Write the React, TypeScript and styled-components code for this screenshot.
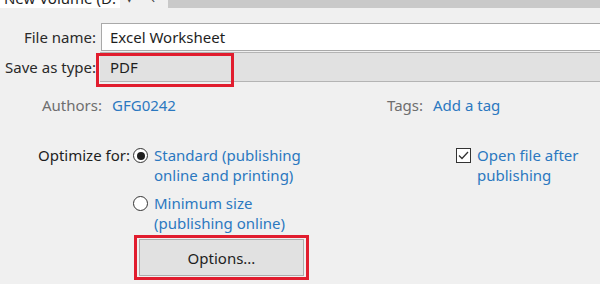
import styled, { createGlobalStyle } from 'styled-components';

const COLORS = {
  bg: '#f0f0f0',
  text: '#1e1e1e',
  muted: '#6e6e6e',
  link: '#2b78c0',
  red: '#e11d2e',
  border: '#acacac',
};

const GlobalStyle = createGlobalStyle`
  html, body {
    margin: 0;
    padding: 0;
    background: ${COLORS.bg};
  }
  body {
    font-family: 'Noto Sans', 'Open Sans', sans-serif;
    font-size: 14px;
    color: ${COLORS.text};
  }
`;

const Page = styled.div`
  width: 600px;
  height: 284px;
  overflow: hidden;
  position: relative;
  background: ${COLORS.bg};
`;

const PathBar = styled.div`
  display: flex;
  height: 8px;
  overflow: hidden;
`;

const PathTab = styled.div`
  width: 120px;
  background: #ffffff;
  overflow: hidden;
  display: flex;
`;

const PathText = styled.span`
  margin-top: -12px;
  line-height: 20px;
  white-space: nowrap;
  font-size: 15px;
`;

const PathGlyph = styled.span<{ w: number }>`
  width: ${({ w }) => w}px;
  margin-top: -12px;
  line-height: 20px;
  font-size: 13px;
  color: #444;
  text-align: center;
  background: ${COLORS.bg};
`;

const PathFill = styled.div`
  flex: 1;
  background: #c9c9c9;
`;

const FormGrid = styled.div`
  display: grid;
  grid-template-columns: 96px 1fr;
  column-gap: 4px;
  row-gap: 1px;
  margin-top: 15px;
  align-items: center;
`;

const FieldLabel = styled.label`
  text-align: right;
  font-size: 15px;
  color: #2a2a2a;
  white-space: nowrap;
`;

const TextInput = styled.div`
  height: 26px;
  margin-left: 1px;
  background: #ffffff;
  border: 1px solid #a9a9a9;
  border-right: none;
  display: flex;
  align-items: center;
  padding-left: 8px;
  font-size: 15px;
`;

const SelectWrap = styled.div`
  position: relative;
`;

const SelectField = styled.div`
  height: 28px;
  border-top: 1px solid #b4b4b4;
  border-bottom: 1px solid #b4b4b4;
  background: #e1e1e1;
  display: flex;
  align-items: center;
  padding-left: 10px;
  font-size: 15px;
`;

const Highlight = styled.div<{ top: number; left: number; w: number; h: number }>`
  position: absolute;
  top: ${({ top }) => top}px;
  left: ${({ left }) => left}px;
  width: ${({ w }) => w}px;
  height: ${({ h }) => h}px;
  border: 3px solid ${COLORS.red};
  box-sizing: border-box;
  pointer-events: none;
`;

const MetaRow = styled.div`
  display: grid;
  grid-template-columns: 42px 70px 275px 46px 1fr;
  margin-top: 13px;
  font-size: 15px;
  line-height: 20px;
`;

const MetaLabel = styled.span<{ col: number }>`
  grid-column: ${({ col }) => col};
  color: ${COLORS.muted};
`;

const LinkText = styled.span`
  color: ${COLORS.link};
`;

const OptimizeRow = styled.div`
  display: flex;
  margin-top: 30px;
  font-size: 15px;
  line-height: 20px;
`;

const OptimizeLabel = styled.div`
  width: 95px;
  padding-left: 38px;
`;

const Choices = styled.div`
  display: flex;
  flex-direction: column;
  width: 323px;
`;

const Choice = styled.div`
  display: flex;
  gap: 6px;
  margin-bottom: 8px;
`;

const Radio = styled.span<{ checked?: boolean }>`
  width: 15px;
  height: 15px;
  margin-top: 3px;
  border-radius: 50%;
  border: 1px solid #333;
  background: #fff;
  box-sizing: border-box;
  display: flex;
  align-items: center;
  justify-content: center;
  flex-shrink: 0;

  &::after {
    content: '';
    width: 8px;
    height: 8px;
    border-radius: 50%;
    background: ${({ checked }) => (checked ? '#1f1f1f' : 'transparent')};
  }
`;

const Checkbox = styled.span`
  width: 15px;
  height: 15px;
  margin-top: 3px;
  border: 1px solid #333;
  background: #fff;
  box-sizing: border-box;
  display: flex;
  align-items: center;
  justify-content: center;
  flex-shrink: 0;
`;

const ButtonWrap = styled.div`
  position: relative;
  width: 165px;
  margin-top: -2px;
  margin-left: 6px;
`;

const Button = styled.button`
  width: 165px;
  height: 37px;
  background: #e1e1e1;
  border: 1px solid #adadad;
  font-family: inherit;
  font-size: 15px;
  color: #1e1e1e;
  padding: 0;
`;

const App = () => (
  <Page>
    <GlobalStyle />
    <PathBar>
      <PathTab>
        <PathText>&nbsp;New Volume (D:</PathText>
      </PathTab>
      <PathGlyph w={18}>▾</PathGlyph>
      <PathGlyph w={30}>‹</PathGlyph>
      <PathFill />
    </PathBar>

    <FormGrid>
      <FieldLabel>File name:</FieldLabel>
      <TextInput>Excel Worksheet</TextInput>
      <FieldLabel>Save as type:</FieldLabel>
      <SelectWrap>
        <SelectField>PDF</SelectField>
        <Highlight top={1} left={-4} w={138} h={34} />
      </SelectWrap>
    </FormGrid>

    <MetaRow>
      <MetaLabel col={2}>Authors:</MetaLabel>
      <LinkText>GFG0242</LinkText>
      <MetaLabel col={4}>Tags:</MetaLabel>
      <LinkText>Add a tag</LinkText>
    </MetaRow>

    <OptimizeRow>
      <OptimizeLabel>Optimize for:</OptimizeLabel>
      <Choices>
        <Choice>
          <Radio checked />
          <LinkText>Standard (publishing<br />online and printing)</LinkText>
        </Choice>
        <Choice>
          <Radio />
          <LinkText>Minimum size<br />(publishing online)</LinkText>
        </Choice>
        <ButtonWrap>
          <Button>Options...</Button>
          <Highlight top={-4} left={-5} w={175} h={45} />
        </ButtonWrap>
      </Choices>
      <Choice>
        <Checkbox>
          <svg width="11" height="9" viewBox="0 0 11 9">
            <path d="M1 4.5 L4 7.5 L10 1" fill="none" stroke="#333" strokeWidth="1.3" />
          </svg>
        </Checkbox>
        <LinkText>Open file after<br />publishing</LinkText>
      </Choice>
    </OptimizeRow>
  </Page>
);

export default App;
